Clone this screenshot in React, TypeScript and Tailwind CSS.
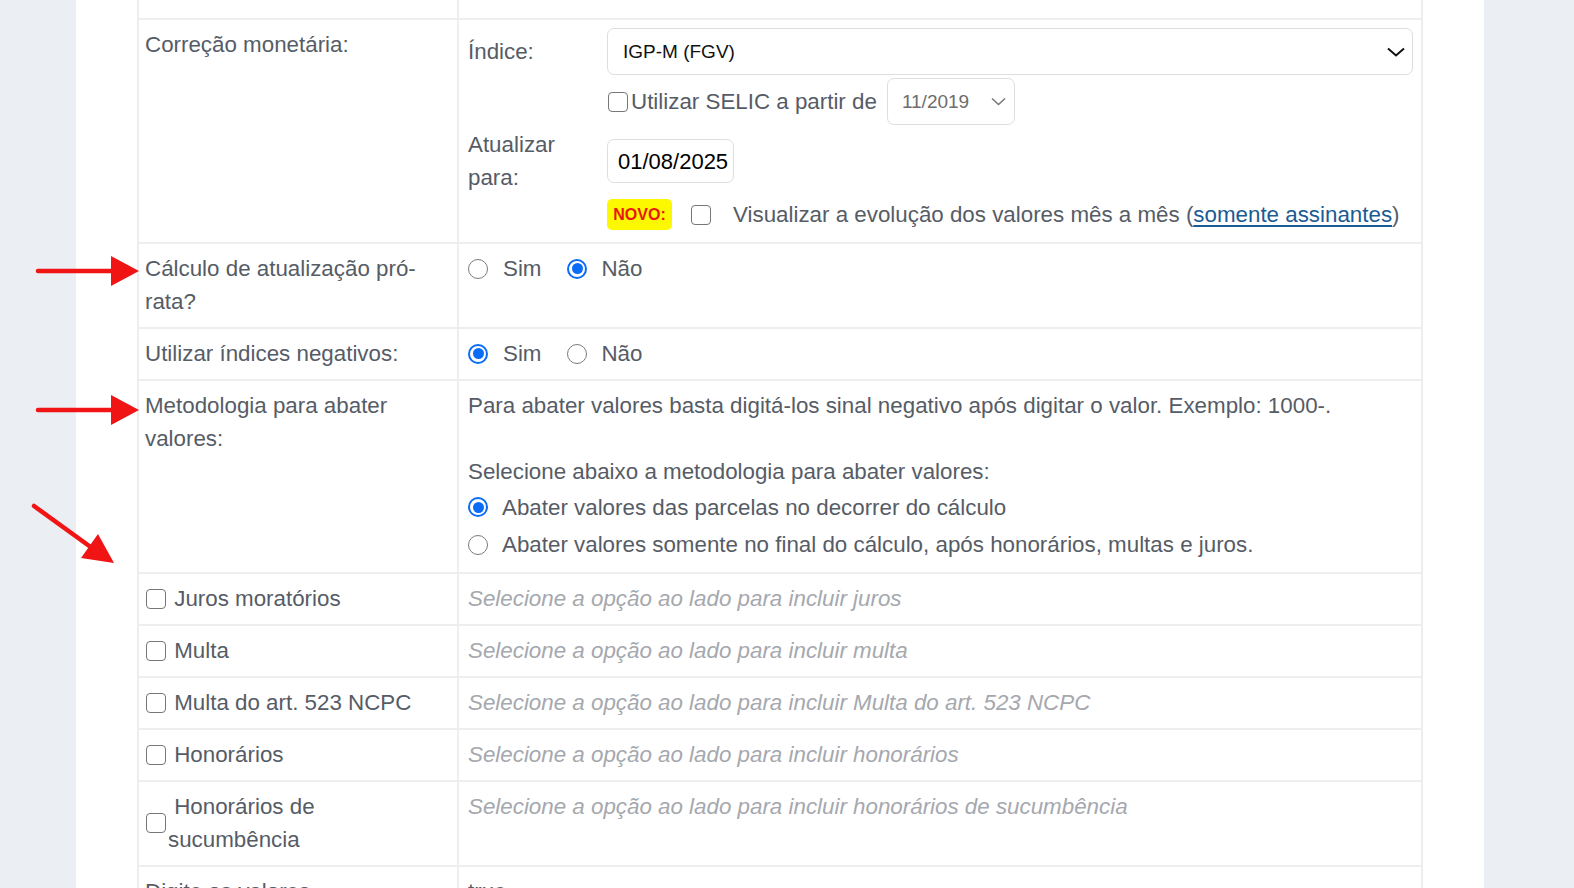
import { ReactNode } from 'react';

const border = 'border-[#eeeeee]';

function Row({ label, children, valueClass = '' }: { label: ReactNode; children?: ReactNode; valueClass?: string }) {
  return (
    <div className={`grid grid-cols-[320px_1fr] border-b-2 ${border}`}>
      <div className={`border-l-2 ${border} pl-[6px] pr-[16px] pt-[8px] pb-[9px]`}>{label}</div>
      <div className={`border-l-2 ${border} pl-[9px] pr-[8px] pt-[8px] pb-[9px] ${valueClass}`}>{children}</div>
    </div>
  );
}

function Radio({ checked }: { checked?: boolean }) {
  if (checked) {
    return (
      <span className="flex h-[20px] w-[20px] shrink-0 items-center justify-center rounded-full border-2 border-[#0b6cf6] bg-white">
        <span className="h-[11px] w-[11px] rounded-full bg-[#0b6cf6]" />
      </span>
    );
  }
  return <span className="h-[20px] w-[20px] shrink-0 rounded-full border border-[#7b7b7b] bg-white" />;
}

function Checkbox({ className = '' }: { className?: string }) {
  return <span className={`h-[20px] w-[20px] shrink-0 rounded-[4px] border-[1.5px] border-[#767676] bg-white ${className}`} />;
}

function CheckLabel({ text }: { text: string }) {
  return (
    <div className="flex items-center">
      <Checkbox className="ml-[1px]" />
      <span className="ml-[2px]">{'\u00a0' + text}</span>
    </div>
  );
}

function Placeholder({ children }: { children: ReactNode }) {
  return <p className="italic text-[#a5a8ae]">{children}</p>;
}

function YesNo({ yes }: { yes: boolean }) {
  return (
    <div className="flex h-[33px] items-center">
      <Radio checked={yes} />
      <span className="ml-[15px]">Sim</span>
      <span className="ml-[26px] flex items-center">
        <Radio checked={!yes} />
      </span>
      <span className="ml-[14px]">Não</span>
    </div>
  );
}

export default function App() {
  return (
    <div className="relative flex h-[888px] w-[1574px] overflow-hidden bg-[#ebeef3] font-['Liberation_Sans',Arial,sans-serif] text-[22.35px] leading-[33px] text-[#565c66]">
      <div className="w-[76px] shrink-0" />
      <div className="w-[1408px] shrink-0 bg-white px-[61px]">
        <div className={`border-r-2 ${border}`}>
          {/* partially scrolled-off row */}
          <div className={`grid h-[20px] grid-cols-[320px_1fr] border-b-2 ${border}`}>
            <div className={`border-l-2 ${border}`} />
            <div className={`border-l-2 ${border}`} />
          </div>

          <Row label="Correção monetária:">
            <div className="flex flex-col">
              <div className="flex h-[47px] items-center">
                <div className="w-[139px] shrink-0">Índice:</div>
                <div className="flex h-full flex-1 items-center justify-between rounded-[7px] border border-[#dedede] pl-[15px] pr-[7px] text-[19px] text-[#111]">
                  <span>IGP-M (FGV)</span>
                  <svg width="18" height="10" viewBox="0 0 18 10" fill="none">
                    <path d="M1 1.5 L9 8.5 L17 1.5" stroke="#111" strokeWidth="2" />
                  </svg>
                </div>
              </div>
              <div className="mt-[3px] flex h-[47px] items-center pl-[139px]">
                <Checkbox className="ml-[1px] h-[19px] w-[18px]" />
                <span className="ml-[3px]">Utilizar SELIC a partir de</span>
                <div className="ml-[10px] flex h-full w-[128px] items-center justify-between rounded-[7px] border border-[#dedede] pl-[14px] pr-[8px] text-[19px] text-[#6d6d6d]">
                  <span>11/2019</span>
                  <svg width="15" height="9" viewBox="0 0 15 9" fill="none">
                    <path d="M1 1.5 L7.5 7.5 L14 1.5" stroke="#777" strokeWidth="1.5" />
                  </svg>
                </div>
              </div>
              <div className="mt-[3px] flex items-center">
                <div className="w-[139px] shrink-0">Atualizar para:</div>
                <div className="flex h-[44px] w-[127px] items-center rounded-[7px] border border-[#dedede] pl-[10px] text-[22px] text-black">
                  01/08/2025
                </div>
              </div>
              <div className="mt-[2px] flex h-[37px] items-center pl-[139px]">
                <span className="flex h-[31px] w-[65px] items-center justify-center rounded-[5px] bg-[#fbf800] text-[16px] font-bold text-[#e8170f]">
                  NOVO:
                </span>
                <Checkbox className="ml-[19px] h-[19px]" />
                <span className="ml-[22px]">
                  Visualizar a evolução dos valores mês a mês (
                  <a className="text-[#1a5a95] underline underline-offset-[3px]">somente assinantes</a>)
                </span>
              </div>
            </div>
          </Row>

          <Row label="Cálculo de atualização pró-rata?">
            <YesNo yes={false} />
          </Row>

          <Row label="Utilizar índices negativos:">
            <YesNo yes={true} />
          </Row>

          <Row label="Metodologia para abater valores:">
            <p>Para abater valores basta digitá-los sinal negativo após digitar o valor. Exemplo: 1000-.</p>
            <div className="h-[33px]" />
            <p>Selecione abaixo a metodologia para abater valores:</p>
            <div className="flex h-[38px] items-center">
              <Radio checked />
              <span className="ml-[14px]">Abater valores das parcelas no decorrer do cálculo</span>
            </div>
            <div className="flex h-[37px] items-center">
              <Radio />
              <span className="ml-[14px]">Abater valores somente no final do cálculo, após honorários, multas e juros.</span>
            </div>
          </Row>

          {[
            ['Juros moratórios', 'Selecione a opção ao lado para incluir juros'],
            ['Multa', 'Selecione a opção ao lado para incluir multa'],
            ['Multa do art. 523 NCPC', 'Selecione a opção ao lado para incluir Multa do art. 523 NCPC'],
            ['Honorários', 'Selecione a opção ao lado para incluir honorários'],
            ['Honorários de sucumbência', 'Selecione a opção ao lado para incluir honorários de sucumbência'],
          ].map(([label, hint]) => (
            <Row key={label} label={<CheckLabel text={label} />}>
              <Placeholder>{hint}</Placeholder>
            </Row>
          ))}

          <Row label="Digite os valores">
            <p>true</p>
          </Row>
        </div>
      </div>
      <div className="flex-1" />

      {/* red annotation arrows drawn over the page */}
      <svg className="pointer-events-none absolute left-0 top-0" width="1574" height="888">
        <line x1="38" y1="271" x2="115" y2="271" stroke="#f01414" strokeWidth="4.5" strokeLinecap="round" />
        <polygon points="111,256 139,271 111,286" fill="#f01414" />
        <line x1="38" y1="410" x2="115" y2="410" stroke="#f01414" strokeWidth="4.5" strokeLinecap="round" />
        <polygon points="111,395 139,410 111,425" fill="#f01414" />
        <line x1="34" y1="506" x2="92" y2="548" stroke="#f01414" strokeWidth="4.5" strokeLinecap="round" />
        <polygon points="81,558 98,534 114,563" fill="#f01414" />
      </svg>
    </div>
  );
}
